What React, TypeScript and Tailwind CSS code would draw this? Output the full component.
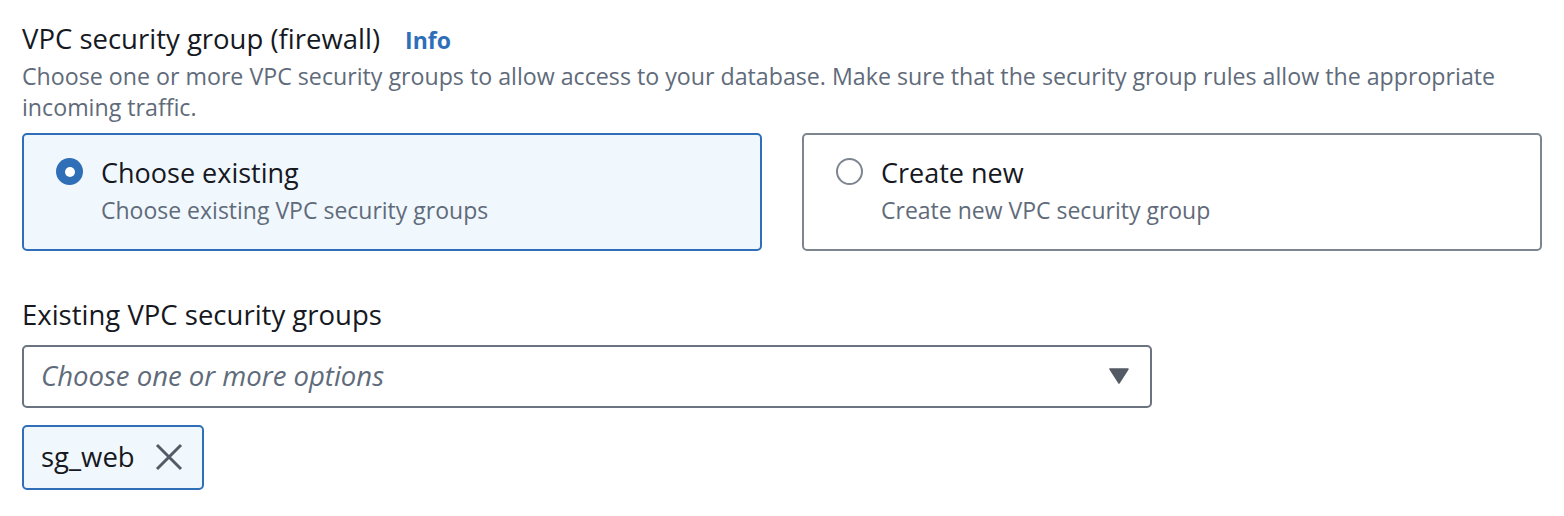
import React from 'react';

const font = { fontFamily: '"Open Sans", "Noto Sans", sans-serif' };

function Radio({ checked }: { checked: boolean }) {
    return checked ? (
        <span className="flex h-[27px] w-[27px] shrink-0 items-center justify-center rounded-full bg-[#2e6fb8]">
            <span className="block h-[10px] w-[10px] rounded-full bg-white" />
        </span>
    ) : (
        <span className="block h-[27px] w-[27px] shrink-0 rounded-full border-[2.5px] border-[#7d8590] bg-white" />
    );
}

function Tile({ checked, title, sub }: { checked: boolean; title: string; sub: string }) {
    return (
        <div
            className={`flex h-[118px] flex-1 gap-[18px] rounded-[5px] border-2 px-[32px] pt-[22px] ${
                checked ? 'border-[#2e6fb8] bg-[#f1f8fd]' : 'border-[#7d8590] bg-white'
            }`}
        >
            <div className="pt-[1.5px]">
                <Radio checked={checked} />
            </div>
            <div>
                <div className="text-[27px] leading-[32px] text-[#16191f]">{title}</div>
                <div className="mt-[7px] text-[23px] leading-[28px] text-[#5f6b7a]">{sub}</div>
            </div>
        </div>
    );
}

export default function App() {
    return (
        <div className="min-h-[516px] bg-white pl-[22px] pr-[22px] pt-[22px]" style={font}>
            <div className="flex items-baseline gap-[25px]">
                <h2 className="text-[27.5px] font-medium leading-[34px] text-[#16191f]">VPC security group (firewall)</h2>
                <span className="text-[23px] font-bold text-[#2e6fb8]">Info</span>
            </div>
            <p className="mt-[3.5px] text-[23.2px] leading-[31px] text-[#5f6b7a]">
                Choose one or more VPC security groups to allow access to your database. Make sure that the security group rules allow the appropriate incoming traffic.
            </p>

            <div className="mt-[9.5px] flex gap-[40px]">
                <Tile checked title="Choose existing" sub="Choose existing VPC security groups" />
                <Tile checked={false} title="Create new" sub="Create new VPC security group" />
            </div>

            <div className="mt-[46px] text-[27.5px] leading-[36px] text-[#16191f]">Existing VPC security groups</div>

            <div className="mt-[12px] flex h-[63px] w-[1130px] items-center justify-between rounded-[5px] border-2 border-[#6b7280] bg-white pl-[17px] pr-[21px]">
                <span className="text-[27.5px] italic text-[#5f6b7a]">Choose one or more options</span>
                <svg width="20" height="16" viewBox="0 0 20 16">
                    <path d="M1 1h18L10 15z" fill="#545b64" stroke="#545b64" strokeWidth="1.5" strokeLinejoin="round" />
                </svg>
            </div>

            <div className="mt-[17px] inline-flex h-[65px] items-center gap-[20px] rounded-[5px] border-2 border-[#2e6fb8] bg-[#f1f8fd] pl-[17px] pr-[19px]">
                <span className="text-[27.5px] text-[#16191f]">sg_web</span>
                <svg width="28" height="28" viewBox="0 0 28 28">
                    <path d="M2 2l24 24M26 2L2 26" stroke="#545b64" strokeWidth="3" />
                </svg>
            </div>
        </div>
    );
}
